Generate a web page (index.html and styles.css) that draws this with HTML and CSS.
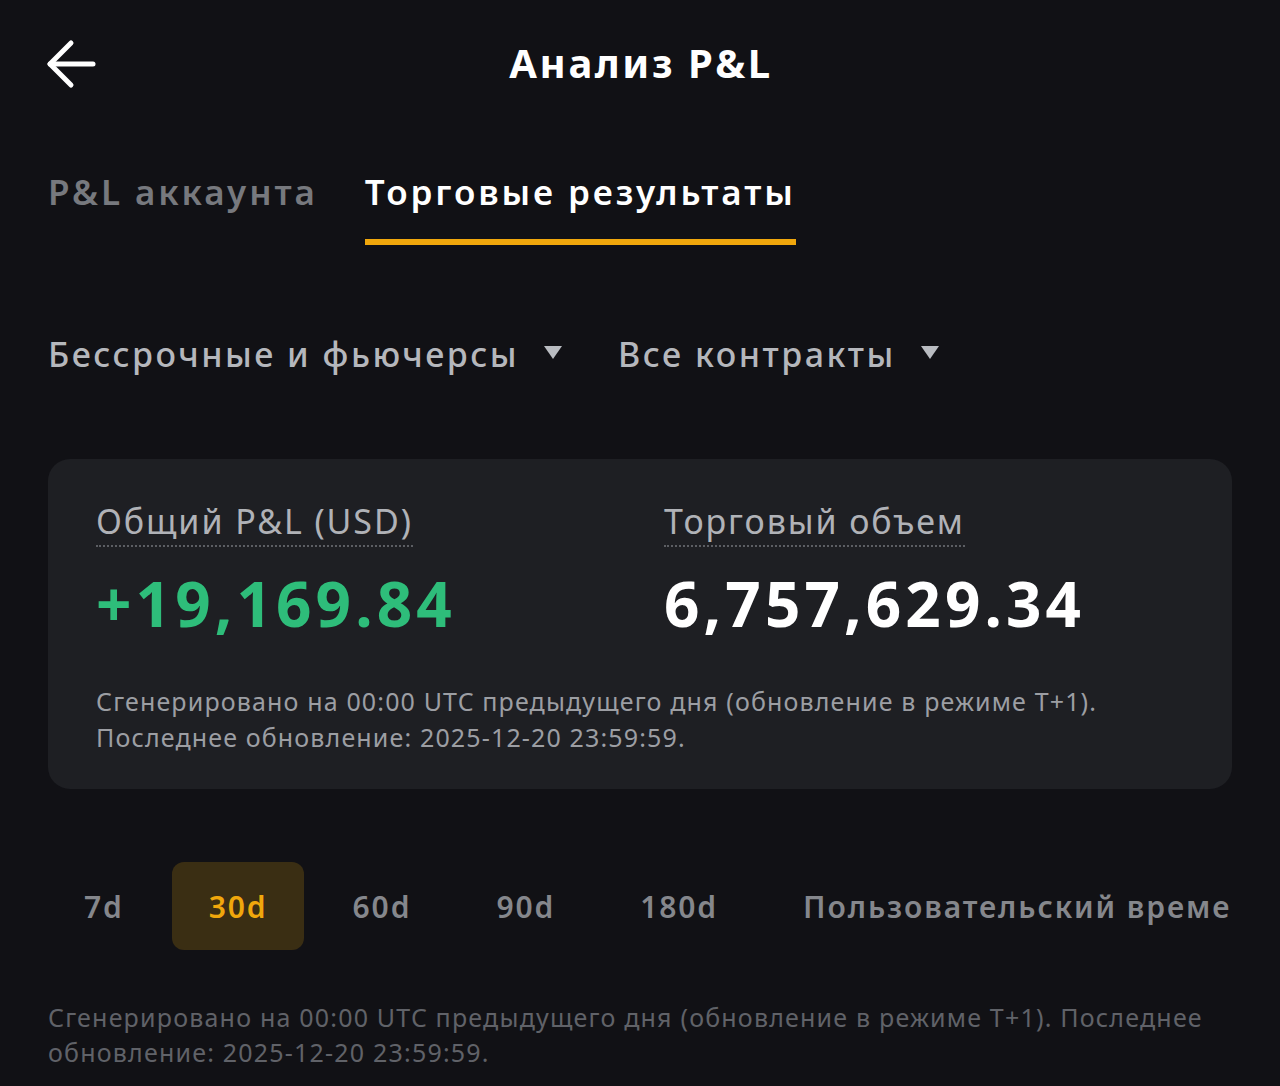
FILE: index.html
```html
<!DOCTYPE html>
<html lang="ru">
<head>
<meta charset="utf-8">
<title>Анализ P&amp;L</title>
<link rel="stylesheet" href="styles.css">
</head>
<body>
<div class="page">
  <header class="topbar">
    <svg class="back" width="52" height="52" viewBox="0 0 52 52" fill="none" stroke="#ffffff" stroke-width="5" stroke-linecap="round" stroke-linejoin="round">
      <path d="M4 26H47"/>
      <path d="M25 5L4 26L25 47"/>
    </svg>
    <h1 class="title">Анализ P&amp;L</h1>
  </header>

  <nav class="tabs">
    <div class="tab">P&amp;L аккаунта</div>
    <div class="tab active">Торговые результаты</div>
  </nav>

  <div class="filters">
    <div class="filter">Бессрочные и фьючерсы <span class="caret"></span></div>
    <div class="filter">Все контракты <span class="caret"></span></div>
  </div>

  <section class="card">
    <div class="stats">
      <div class="stat">
        <div class="label">Общий P&amp;L (USD)</div>
        <div class="value green">+19,169.84</div>
      </div>
      <div class="stat">
        <div class="label">Торговый объем</div>
        <div class="value">6,757,629.34</div>
      </div>
    </div>
    <p class="note">Сгенерировано на 00:00 UTC предыдущего дня (обновление в режиме T+1).<br>Последнее обновление: 2025-12-20 23:59:59.</p>
  </section>

  <div class="ranges">
    <div class="range">7d</div>
    <div class="range active">30d</div>
    <div class="range">60d</div>
    <div class="range">90d</div>
    <div class="range">180d</div>
    <div class="range">Пользовательский временной диапазон</div>
  </div>

  <p class="footnote">Сгенерировано на 00:00 UTC предыдущего дня (обновление в режиме T+1). Последнее обновление: 2025-12-20 23:59:59.</p>
</div>
</body>
</html>
```

FILE: styles.css
```css
* { box-sizing: border-box; }
html, body {
  margin: 0;
  padding: 0;
  background: #111115;
}
body {
  font-family: "Noto Sans", "Liberation Sans", sans-serif;
  color: #ffffff;
  width: 1280px;
  height: 1086px;
  overflow: hidden;
}
.page {
  padding: 0 48px;
}
.topbar {
  position: relative;
  height: 128px;
  display: flex;
  align-items: center;
  justify-content: center;
}
.back {
  position: absolute;
  left: -2px;
  top: 38px;
}
.title {
  margin: 0;
  font-size: 40px;
  font-weight: 700;
  letter-spacing: 2.6px;
  line-height: 1;
  position: relative;
  top: -1px;
  left: 1px;
}
.tabs {
  display: flex;
  gap: 47px;
  height: 130px;
}
.tab {
  font-size: 35px;
  font-weight: 600;
  color: #77797e;
  padding-top: 40px;
  height: 117px;
  line-height: 48px;
  letter-spacing: 2.9px;
}
.tab.active {
  color: #ffffff;
  border-bottom: 6px solid #f0a70c;
  margin-left: 0;
}
.filters {
  display: flex;
  gap: 56px;
  padding-top: 72px;
  height: 201px;
}
.filter {
  display: flex;
  align-items: center;
  gap: 25px;
  font-size: 34px;
  font-weight: 500;
  color: #b5b7bc;
  height: 48px;
  letter-spacing: 2.5px;
}
.caret {
  width: 0;
  height: 0;
  border-left: 9px solid transparent;
  border-right: 9px solid transparent;
  border-top: 13px solid #b9bcc1;
  margin-top: -4px;
}
.card {
  background: #1e1f23;
  border-radius: 22px;
  height: 330px;
  padding: 39px 48px 0;
}
.stats {
  display: grid;
  grid-template-columns: 568px 1fr;
}
.label {
  display: inline-block;
  font-size: 34px;
  font-weight: 400;
  color: #b0b2b7;
  line-height: 46px;
  border-bottom: 2px dotted #5c5e63;
  padding-bottom: 1px;
  letter-spacing: 1.9px;
}
.value {
  font-size: 62px;
  font-weight: 700;
  line-height: 80px;
  margin-top: 16px;
  letter-spacing: 4.1px;
}
.value.green { color: #2ebd7a; }
.note {
  margin: 40px 0 0;
  font-size: 25px;
  line-height: 36px;
  color: #9c9ea3;
  letter-spacing: 1.15px;
}
.ranges {
  margin-top: 73px;
  display: flex;
  gap: 12px;
  overflow: hidden;
  width: 1184px;
  margin-left: -1px;
}
.range {
  flex: none;
  height: 88px;
  display: flex;
  align-items: center;
  padding: 0 36px 0 37px;
  font-size: 30px;
  font-weight: 600;
  color: #85878c;
  border-radius: 12px;
  white-space: nowrap;
  letter-spacing: 1.9px;
}
.range.active {
  background: #3a2e13;
  color: #f0a70c;
}
.footnote {
  margin: 50px 0 0;
  font-size: 25px;
  line-height: 35px;
  color: #606268;
  letter-spacing: 1.2px;
}
```
